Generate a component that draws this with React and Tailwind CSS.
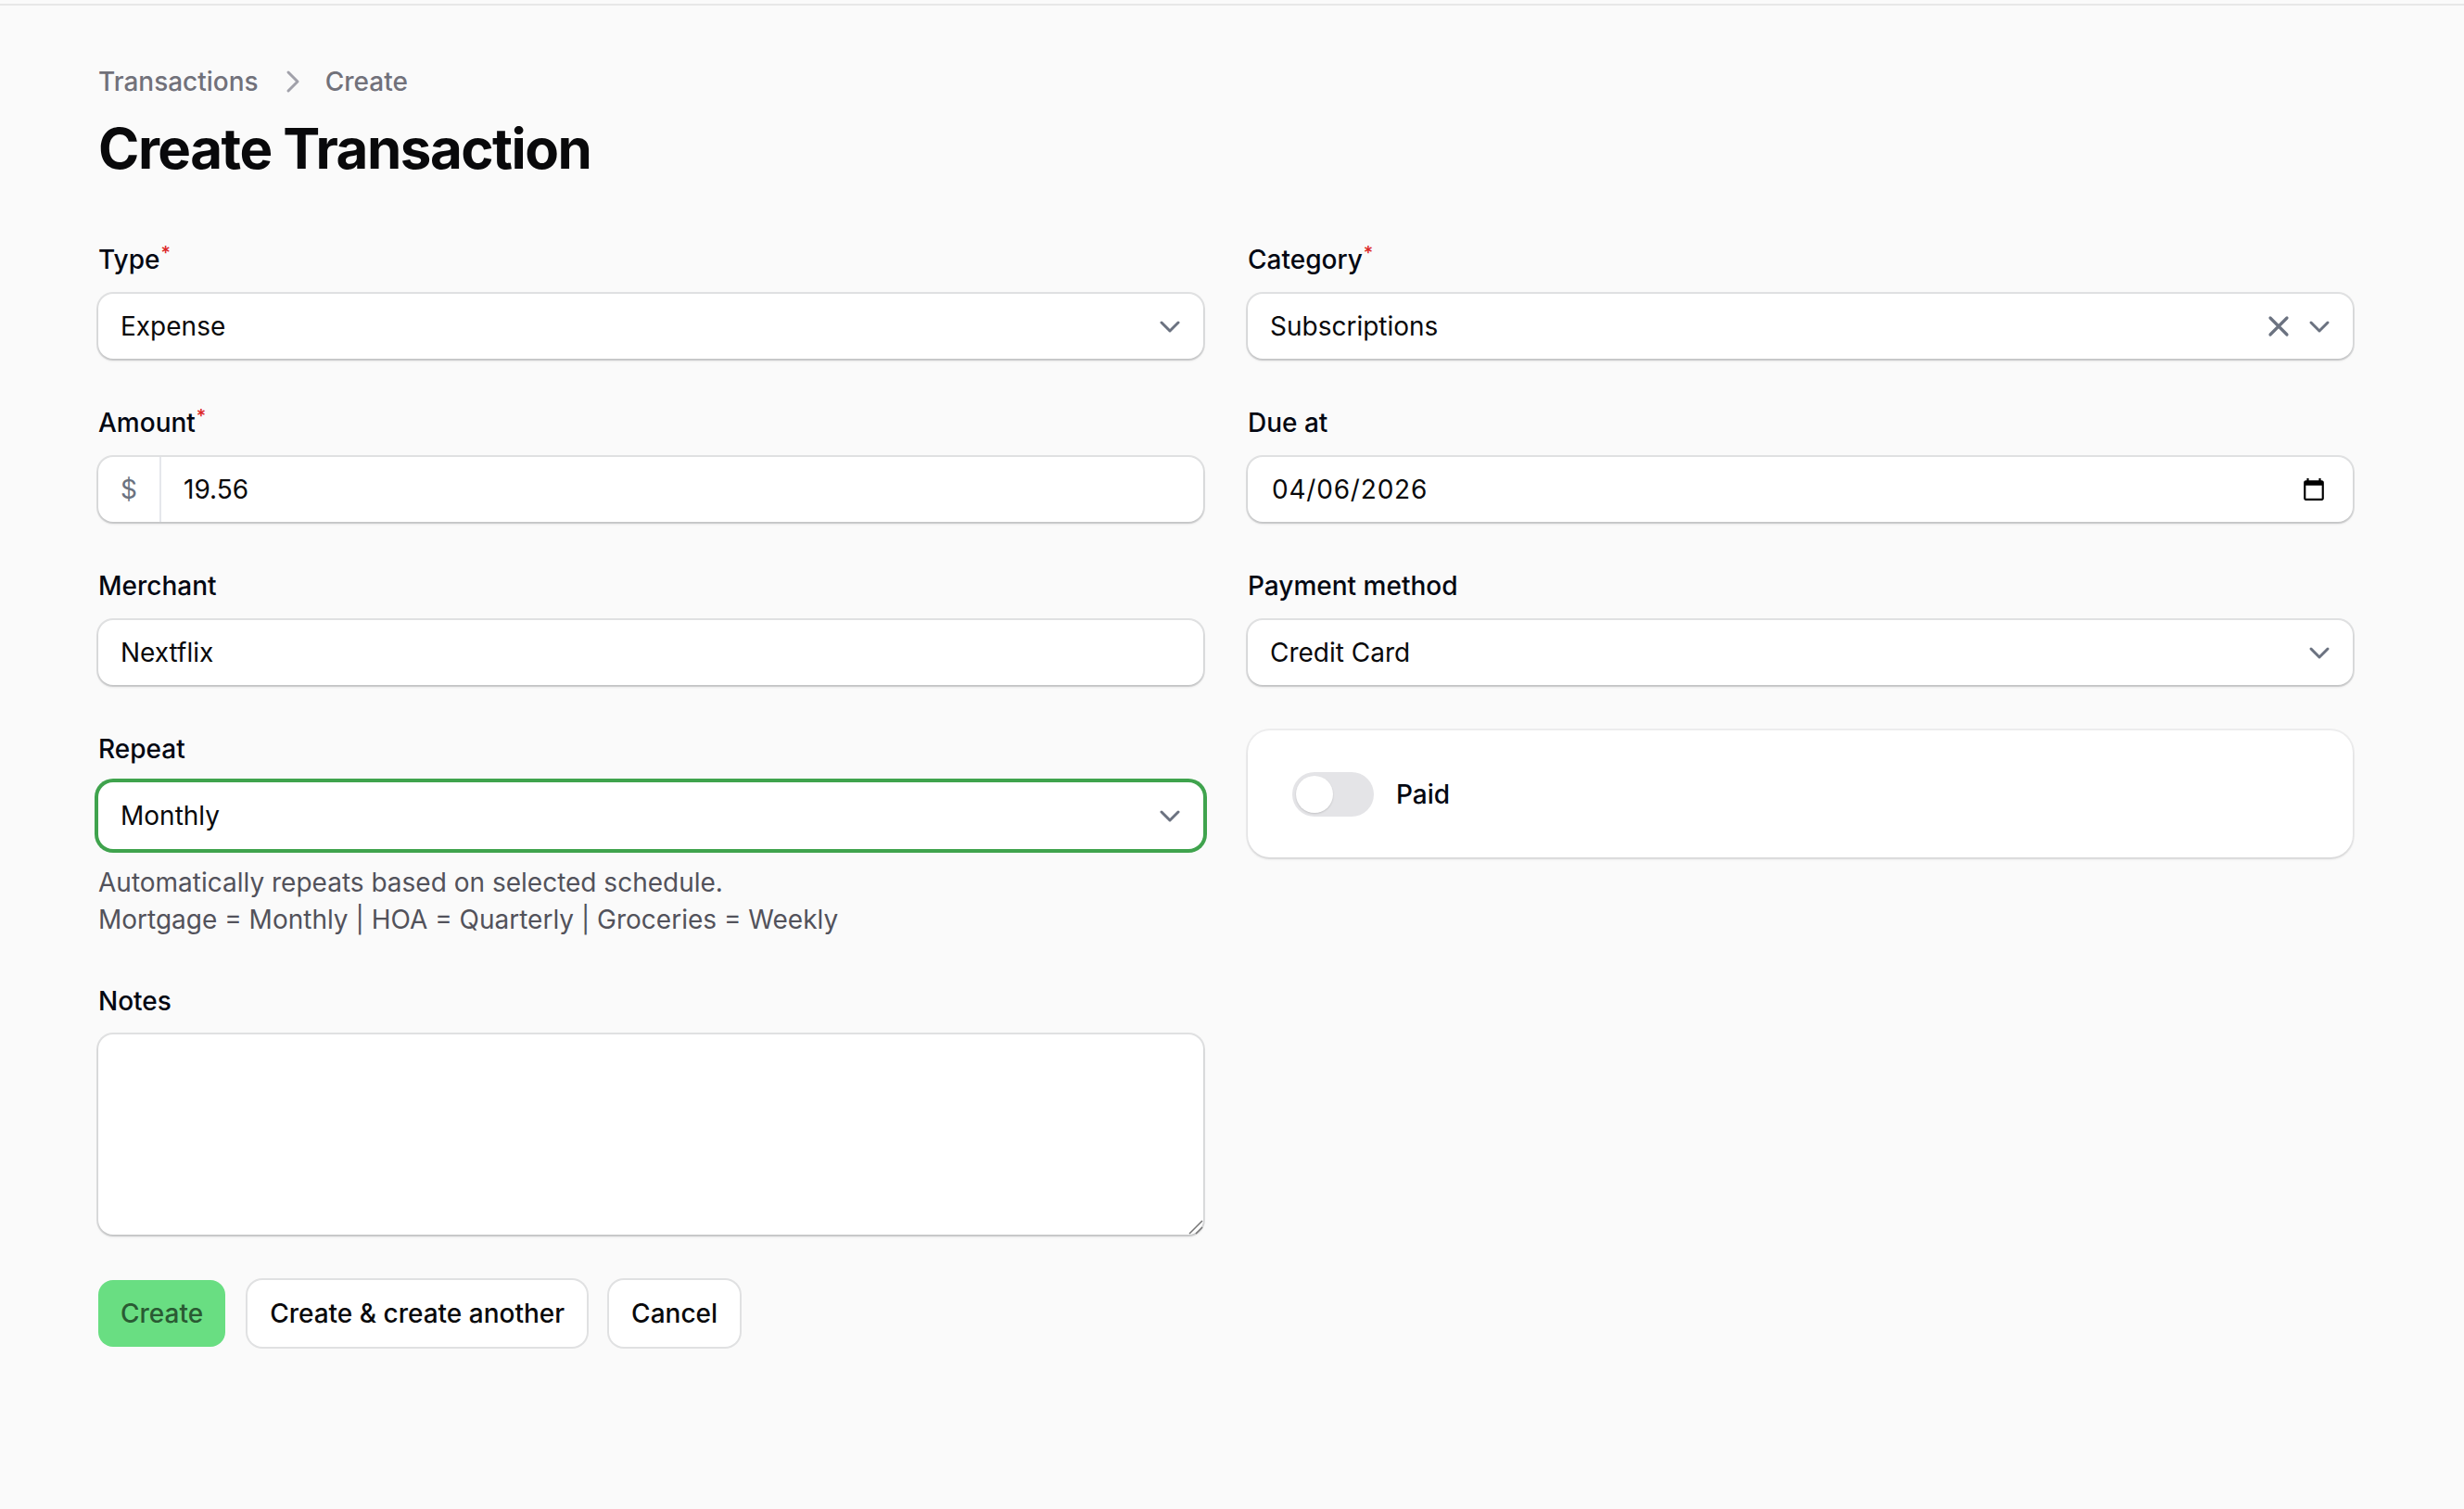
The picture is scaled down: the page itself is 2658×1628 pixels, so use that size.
import React from 'react';

const fieldBox = 'mt-[17px] mb-[2px] flex h-[70px] items-center rounded-[16px] bg-white shadow-[0_2px_3px_rgba(0,0,0,0.14),0_0_0_2px_rgba(3,7,18,0.1)]';

const Chevron = () => (
    <svg viewBox="0 0 20 20" className="h-[40px] w-[40px] shrink-0" fill="none" stroke="#6b7280" strokeWidth="1.5" strokeLinecap="round" strokeLinejoin="round">
        <path d="M5.5 8l4.5 4.5L14.5 8" />
    </svg>
);

const Label = ({ children, required }) => (
    <div className="h-[40px] text-[28px] leading-[40px] font-medium text-[#030712]">
        {children}
        {required && <sup className="ml-[1px] text-[20px] font-medium text-[#dc2626]">*</sup>}
    </div>
);

const SelectField = ({ label, value, required, clearable, focused }) => (
    <div>
        <Label required={required}>{label}</Label>
        {focused ? (
            <div className="mt-[16px] mb-[1px] flex h-[72px] items-center rounded-[16px] bg-white pr-[16px] pl-[24px] ring-4 ring-[#3fa34d]">
                <span className="flex-1 text-[28px] text-[#09090b]">{value}</span>
                <Chevron />
            </div>
        ) : (
            <div className={`${fieldBox} pr-[16px] pl-[24px]`}>
                <span className="flex-1 text-[28px] text-[#09090b]">{value}</span>
                {clearable && (
                    <svg viewBox="0 0 20 20" className="mr-[4px] h-[40px] w-[40px]" fill="none" stroke="#6b7280" strokeWidth="1.6" strokeLinecap="round">
                        <path d="M5.5 5.5l9 9M14.5 5.5l-9 9" />
                    </svg>
                )}
                <Chevron />
            </div>
        )}
    </div>
);

const App = () => {
    return (
        <div className="min-h-[1628px] bg-[#fafafa] pt-[4px] font-['Inter',sans-serif]">
            <div className="border-t-2 border-[#e7e7e7] pt-[62px] pr-[120px] pl-[106px]">
                <nav className="flex h-[40px] items-center text-[28px] leading-[40px] font-medium text-[#71717a]">
                    <span>Transactions</span>
                    <svg viewBox="0 0 20 20" className="mr-[15px] ml-[17px] h-[40px] w-[40px] shrink-0" fill="none" stroke="#a1a1aa" strokeWidth="1.5" strokeLinecap="round" strokeLinejoin="round">
                        <path d="M7.5 5l5 5-5 5" />
                    </svg>
                    <span>Create</span>
                </nav>
                <h1 className="mt-[16px] text-[60px] leading-[72px] font-bold tracking-[-1.5px] text-[#09090b]">Create Transaction</h1>

                <div className="mt-[64px] grid grid-cols-2 items-start gap-x-[48px] gap-y-[47px]">
                    <SelectField label="Type" value="Expense" required />
                    <SelectField label="Category" value="Subscriptions" required clearable />

                    <div>
                        <Label required>Amount</Label>
                        <div className={fieldBox}>
                            <span className="flex h-full w-[68px] items-center justify-center border-r-2 border-[#e5e7eb] text-[28px] text-[#6b7280]">$</span>
                            <span className="pl-[24px] text-[28px] text-[#09090b]">19.56</span>
                        </div>
                    </div>
                    <div>
                        <Label>Due at</Label>
                        <div className={`${fieldBox} pr-[29px] pl-[26px]`}>
                            <span className="flex-1 text-[28px] tracking-[0.8px] text-[#09090b]">04/06/2026</span>
                            <svg viewBox="0 0 24 24" className="h-[26px] w-[26px]" fill="#000">
                                <path d="M20 3h-1V1h-2v2H7V1H5v2H4c-1.1 0-2 .9-2 2v16c0 1.1.9 2 2 2h16c1.1 0 2-.9 2-2V5c0-1.1-.9-2-2-2zm0 18H4V8h16v13z" />
                            </svg>
                        </div>
                    </div>

                    <div>
                        <Label>Merchant</Label>
                        <div className={`${fieldBox} pl-[24px] text-[28px] text-[#09090b]`}>Nextflix</div>
                    </div>
                    <SelectField label="Payment method" value="Credit Card" />

                    <div>
                        <SelectField label="Repeat" value="Monthly" focused />
                        <div className="mt-[16px] mb-[1px] text-[28px] leading-[40px] text-[#52525b]">
                            <p>Automatically repeats based on selected schedule.</p>
                            <p>Mortgage = Monthly | HOA = Quarterly | Groceries = Weekly</p>
                        </div>
                    </div>
                    <div className="flex h-[137px] items-center gap-[24px] rounded-[24px] bg-white pl-[48px] shadow-[0_2px_3px_rgba(0,0,0,0.1),0_0_0_2px_rgba(3,7,18,0.05)]">
                        <span className="flex h-[48px] w-[88px] items-center rounded-full bg-[#e4e4e7] pl-[4px]">
                            <span className="h-[40px] w-[40px] rounded-full bg-white shadow-[0_1px_2px_rgba(0,0,0,0.15)]" />
                        </span>
                        <span className="text-[28px] font-medium text-[#030712]">Paid</span>
                    </div>

                    <div>
                        <Label>Notes</Label>
                        <div className="relative mt-[16px] mb-[2px]">
                            <textarea className="block h-[216px] w-full resize-none rounded-[16px] bg-white shadow-[0_2px_3px_rgba(0,0,0,0.14),0_0_0_2px_rgba(3,7,18,0.1)] outline-none" />
                            <svg viewBox="0 0 16 16" className="absolute right-0 bottom-0 h-[16px] w-[16px]" fill="none" stroke="#757575" strokeWidth="1.5">
                                <path d="M1 15L15 1M8 15l7-7" />
                            </svg>
                        </div>
                    </div>
                </div>

                <div className="mt-[47px] flex items-center gap-[24px] text-[28px] font-medium">
                    <button className="h-[72px] rounded-[16px] bg-[#69de82] px-[24px] font-medium text-[#2a5a33]">Create</button>
                    <button className="h-[72px] rounded-[16px] bg-white px-[24px] font-medium text-[#09090b] shadow-[0_0_0_2px_rgba(3,7,18,0.1)]">Create &amp; create another</button>
                    <button className="h-[72px] rounded-[16px] bg-white px-[24px] font-medium text-[#09090b] shadow-[0_0_0_2px_rgba(3,7,18,0.1)]">Cancel</button>
                </div>
            </div>
        </div>
    );
};

export default App;
